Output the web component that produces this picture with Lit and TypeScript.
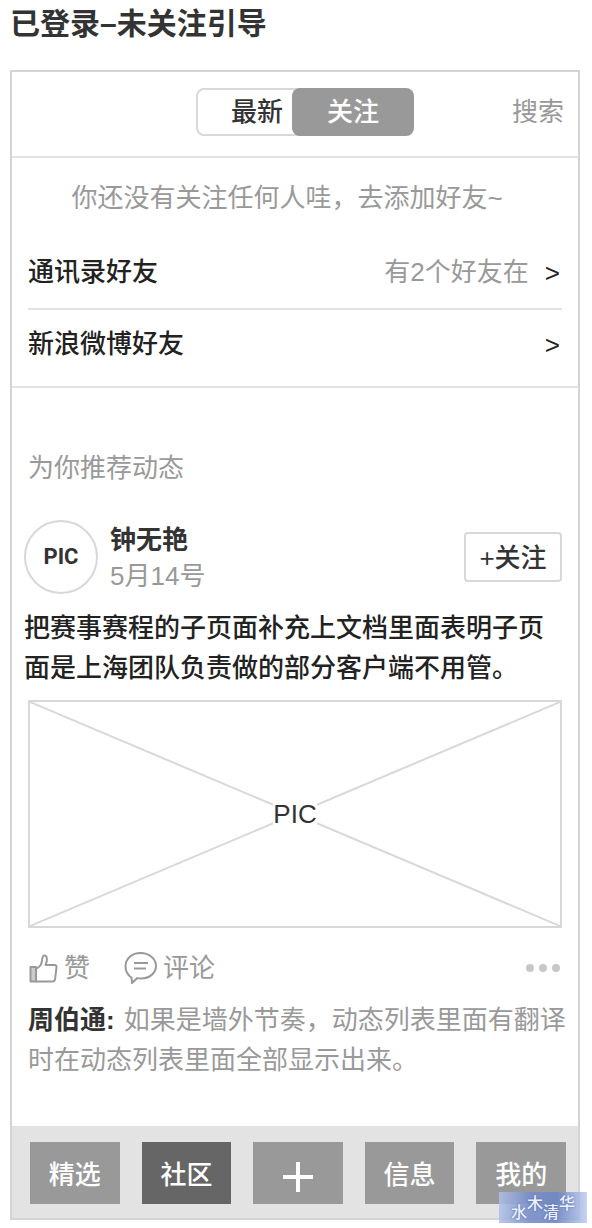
import { LitElement, html, css, svg } from "lit";
import { customElement, property, state } from "lit/decorators.js";
import { classMap } from "lit/directives/class-map.js";

const base = css`
  :host {
    display: block;
    box-sizing: border-box;
  }
  *,
  *::before,
  *::after {
    box-sizing: border-box;
  }
  button {
    margin: 0;
    padding: 0;
    border: 0;
    background: none;
    color: inherit;
    font: inherit;
    cursor: pointer;
  }
  a {
    color: inherit;
    text-decoration: none;
  }
  h1,
  h2,
  p {
    margin: 0;
    font: inherit;
  }
`;

@customElement("feed-header")
export class FeedHeader extends LitElement {
  static styles = [
    base,
    css`
      .bar {
        display: grid;
        grid-template-columns: 1fr auto 1fr;
        align-items: center;
        height: 86px;
        padding: 0 14px 4px;
        border-bottom: 2px solid #e2e2e2;
      }
      .tabs {
        grid-column: 2;
        display: flex;
        height: 48px;
        margin-left: 20px;
      }
      .tab {
        width: 122px;
        border-radius: 8px;
        color: #333;
        font-weight: 500;
      }
      .tab.off {
        border: 2px solid #d8d8d8;
        background: #fff;
      }
      .tab.on {
        position: relative;
        background: #999;
        color: #fff;
      }
      .tab + .tab {
        margin-left: -26px;
      }
      .search {
        justify-self: end;
        color: #999;
      }
    `,
  ];

  @state() private active = "关注";

  render() {
    return html`<header class="bar">
      <div class="tabs">
        ${["最新", "关注"].map(
          (t) => html`<button
            class=${classMap({ tab: true, on: t === this.active, off: t !== this.active })}
            @click=${() => (this.active = t)}
          >${t}</button>`
        )}
      </div>
      <button class="search">搜索</button>
    </header>`;
  }
}

@customElement("friend-sources")
export class FriendSources extends LitElement {
  static styles = [
    base,
    css`
      :host {
        border-bottom: 2px solid #e2e2e2;
        padding: 2px 16px 8px;
      }
      .hint {
        padding-right: 16px;
        line-height: 76px;
        text-align: center;
        color: #999;
      }
      .row {
        display: flex;
        align-items: center;
        gap: 16px;
        line-height: 72px;
        color: #222;
        font-weight: 500;
      }
      .row + .row {
        border-top: 2px solid #e2e2e2;
        line-height: 68px;
      }
      .label {
        flex: 1;
      }
      .note {
        font-weight: 400;
        color: #999;
      }
      .arrow {
        padding: 2px 2px 0 0;
        line-height: 66px;
      }
    `,
  ];

  render() {
    return html`
      <p class="hint">你还没有关注任何人哇，去添加好友~</p>
      <a class="row" href="#contacts">
        <span class="label">通讯录好友</span>
        <span class="note">有2个好友在</span>
        <span class="arrow">&gt;</span>
      </a>
      <a class="row" href="#weibo">
        <span class="label">新浪微博好友</span>
        <span class="arrow">&gt;</span>
      </a>
    `;
  }
}

const thumbIcon = svg`
  <path d="M1.500 13h5.500v14.500H1.500z" fill="#ccc" />
  <path d="M7 14.500c3.500-.8 5.500-3.500 6-8 .3-3 .8-5 2.500-5 2 0 2.600 2 2.300 4.800-.2 2-.7 3.400-1.200 4.700h9c1.400 0 2 1 1.900 2.300l-1.400 11.700c-.2 1.500-1 2.500-2.500 2.500H7z" />`;

const bubbleIcon = svg`
  <path d="M7.500 26.500C3.500 24 1.500 20 1.500 15.500 1.500 7.500 8 2 16.500 2S32 7.500 32 14.800 25.500 27.500 17 27.500c-1.300 0-2.500-.1-3.700-.4L8 32z" />
  <path d="M10 12h14M10 17.500h12" />`;

@customElement("feed-post")
export class FeedPost extends LitElement {
  static styles = [
    base,
    css`
      :host {
        padding: 0 16px 0 12px;
      }
      .author {
        display: flex;
        align-items: center;
        gap: 12px;
        height: 74px;
      }
      .avatar {
        display: grid;
        place-items: center;
        width: 74px;
        height: 74px;
        border: 2px solid #d8d8d8;
        border-radius: 50%;
        font-family: Roboto, sans-serif;
        font-size: 22px;
        font-weight: 700;
        color: #333;
      }
      .who {
        flex: 1;
        padding-top: 2px;
        line-height: 36px;
      }
      .name {
        font-weight: 700;
        color: #333;
      }
      .date {
        color: #999;
      }
      .follow {
        width: 98px;
        height: 50px;
        padding-top: 2px;
        border: 2px solid #d8d8d8;
        border-radius: 4px;
        font-weight: 500;
        color: #333;
      }
      .body {
        margin-top: 14px;
        line-height: 40px;
        font-weight: 500;
        color: #222;
      }
      .media {
        display: grid;
        height: 228px;
        margin: 12px 0 0 4px;
        border: 2px solid #d8d8d8;
      }
      .cross,
      .caption {
        grid-area: 1 / 1;
      }
      .cross {
        width: 100%;
        height: 224px;
        stroke: #d8d8d8;
        stroke-width: 2;
      }
      .caption {
        place-self: center;
        background: #fff;
        line-height: 24px;
        color: #333;
      }
      .actions {
        display: flex;
        align-items: center;
        height: 40px;
        margin: 20px 0 0 4px;
        color: #999;
      }
      .action {
        display: flex;
        align-items: center;
        gap: 5px;
        margin-right: 34px;
      }
      .icon {
        fill: none;
        stroke: #999;
        stroke-width: 2;
        stroke-linejoin: round;
      }
      .more {
        display: flex;
        gap: 5px;
        margin-left: auto;
        padding: 8px 2px;
      }
      .dot {
        width: 8px;
        height: 8px;
        border-radius: 50%;
        background: #c8c8c8;
      }
      .comment {
        margin: 12px -4px 0 4px;
        line-height: 40px;
        color: #999;
      }
      .commenter {
        margin-right: 9px;
        font-weight: 700;
        color: #333;
      }
    `,
  ];

  render() {
    return html`<article>
      <div class="author">
        <div class="avatar">PIC</div>
        <div class="who">
          <div class="name">钟无艳</div>
          <div class="date">5月14号</div>
        </div>
        <button class="follow">+关注</button>
      </div>
      <p class="body">把赛事赛程的子页面补充上文档里面表明子页面是上海团队负责做的部分客户端不用管。</p>
      <div class="media">
        <svg class="cross" aria-hidden="true">
          <line x1="0" y1="0" x2="100%" y2="100%" />
          <line x1="0" y1="100%" x2="100%" y2="0" />
        </svg>
        <span class="caption">PIC</span>
      </div>
      <div class="actions">
        <button class="action">
          <svg class="icon" width="31" height="29" viewBox="-1 0 31 29" aria-hidden="true">${thumbIcon}</svg>赞
        </button>
        <button class="action">
          <svg class="icon" width="34" height="34" viewBox="0 0 34 34" aria-hidden="true">${bubbleIcon}</svg>评论
        </button>
        <button class="more" aria-label="更多">
          <span class="dot"></span><span class="dot"></span><span class="dot"></span>
        </button>
      </div>
      <p class="comment"><b class="commenter">周伯通:</b>如果是墙外节奏，动态列表里面有翻译时在动态列表里面全部显示出来。</p>
    </article>`;
  }
}

@customElement("tab-bar")
export class TabBar extends LitElement {
  static styles = [
    base,
    css`
      .nav {
        display: flex;
        gap: 22px;
        padding: 16px 12px 14px 18px;
        background: #e3e3e3;
      }
      .item {
        display: grid;
        place-items: center;
        flex: 1;
        height: 62px;
        padding-top: 4px;
        background: #999;
        color: #fff;
        font-weight: 500;
      }
      .item.current {
        background: #666;
      }
      .plus {
        margin-top: 4px;
        stroke: #fff;
        stroke-width: 4;
      }
    `,
  ];

  @property() current = "社区";

  render() {
    const items = ["精选", "社区", "+", "信息", "我的"];
    return html`<nav class="nav">
      ${items.map(
        (t) => html`<button
          class=${classMap({ item: true, current: t === this.current })}
          aria-label=${t === "+" ? "发布" : t}
          @click=${() => (this.current = t)}
        >${t === "+"
          ? html`<svg class="plus" width="30" height="30" viewBox="0 0 30 30"><path d="M0 15h30M15 0v30" /></svg>`
          : t}</button>`
      )}
    </nav>`;
  }
}

@customElement("app-root")
export class AppRoot extends LitElement {
  static styles = [
    base,
    css`
      :host {
        position: relative;
        padding: 0 12px 8px 10px;
        background: #fff;
        font: 26px/36px "Liberation Sans", "Noto Sans CJK SC", sans-serif;
      }
      .title {
        height: 70px;
        font-size: 30px;
        line-height: 48px;
        font-weight: 700;
        color: #333;
      }
      .phone {
        border: 2px solid #d4d4d4;
      }
      .section {
        padding: 62px 16px 34px;
        color: #999;
      }
      .tabs {
        margin-top: 46px;
      }
      .stamp {
        position: absolute;
        right: 5px;
        bottom: 5px;
        display: flex;
        justify-content: center;
        width: 88px;
        height: 31px;
        background: linear-gradient(
          90deg,
          rgba(176, 192, 232, 0.85),
          rgba(120, 142, 200, 0.9) 35%,
          rgba(110, 134, 196, 0.9) 65%,
          rgba(190, 203, 240, 0.85)
        );
        color: #eef2ff;
        font: 500 16px/20px "Noto Sans CJK SC", sans-serif;
        text-shadow: 0 0 2px #4a62a8;
      }
      .low {
        padding-top: 9px;
      }
    `,
  ];

  render() {
    return html`
      <h1 class="title">已登录–未关注引导</h1>
      <main class="phone">
        <feed-header></feed-header>
        <friend-sources></friend-sources>
        <h2 class="section">为你推荐动态</h2>
        <feed-post></feed-post>
        <tab-bar class="tabs"></tab-bar>
      </main>
      <div class="stamp">
        <span class="low">水</span><span>木</span><span class="low">清</span><span>华</span>
      </div>
    `;
  }
}
